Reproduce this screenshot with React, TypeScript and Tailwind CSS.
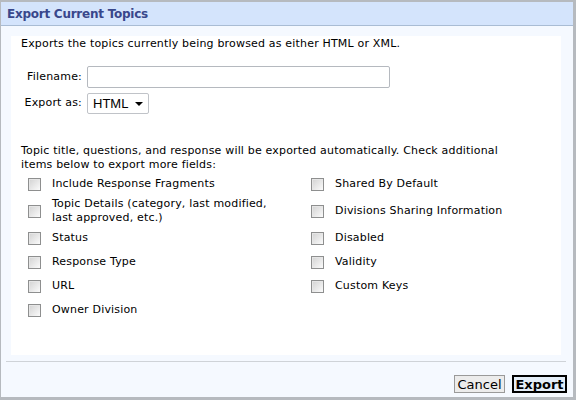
import React from "react";

const leftItems: { label: React.ReactNode; tall?: boolean }[] = [
  { label: "Include Response Fragments" },
  {
    label: (
      <>
        Topic Details (category, last modified,
        <br />
        last approved, etc.)
      </>
    ),
    tall: true,
  },
  { label: "Status" },
  { label: "Response Type" },
  { label: "URL" },
  { label: "Owner Division" },
];

const rightItems = [
  "Shared By Default",
  "Divisions Sharing Information",
  "Disabled",
  "Validity",
  "Custom Keys",
];

function Checkbox() {
  return (
    <span className="w-[13px] h-[13px] flex-shrink-0 border border-[#8e8f8f] bg-gradient-to-br from-[#d2d2d2] to-[#fbfbfb] shadow-[inset_1px_1px_0_#e6e6e6]" />
  );
}

function CheckRow({ children, tall }: { children: React.ReactNode; tall?: boolean }) {
  return (
    <div className={`flex items-center gap-[11px] pl-[7px] ${tall ? "h-[30px]" : "h-[24px]"}`}>
      <Checkbox />
      <span className="leading-[14px]">{children}</span>
    </div>
  );
}

export default function App() {
  return (
    <div className="w-[576px] h-[400px] flex flex-col border-l border-t-2 border-r-[3px] border-b-[3px] border-[#b6babf] bg-[#f5f9ff] font-['DejaVu_Sans',sans-serif] text-[11px] tracking-[0.18px] text-black">
      <div className="h-[24px] flex items-center px-[6px] bg-[#d4e4fc] border-b border-[#a9bcd4]">
        <h1 className="text-[12px] font-bold tracking-[-0.25px] text-[#39478b]">Export Current Topics</h1>
      </div>

      <div className="h-[319px] mt-[10px] ml-[10px] mr-[12px] bg-white px-[10px] pt-[1px] flex flex-col">
        <p className="leading-[14px]">Exports the topics currently being browsed as either HTML or XML.</p>

        <div className="mt-[15px] grid grid-cols-[61px_1fr] gap-x-[5px] gap-y-[5px] items-center">
          <label className="text-right">Filename:</label>
          <input className="w-[303px] h-[22px] border border-[#b5b9bf] rounded-[2px] bg-white outline-none" />
          <label className="text-right">Export as:</label>
          <div className="w-[62px] h-[21px] border border-[#c0c3c8] rounded-[2px] flex items-center justify-between pl-[5px] pr-[5px] font-['Liberation_Sans',sans-serif] text-[13px] tracking-normal">
            <span>HTML</span>
            <span className="w-0 h-0 border-l-[4px] border-r-[4px] border-t-[4px] border-l-transparent border-r-transparent border-t-black" />
          </div>
        </div>

        <p className="mt-[30px] leading-[14px]">
          Topic title, questions, and response will be exported automatically. Check additional
          <br />
          items below to export more fields:
        </p>

        <div className="grid grid-cols-[283px_1fr]">
          <div className="flex flex-col">
            {leftItems.map((item, i) => (
              <CheckRow key={i} tall={item.tall}>
                {item.label}
              </CheckRow>
            ))}
          </div>
          <div className="flex flex-col">
            {rightItems.map((label, i) => (
              <CheckRow key={label} tall={i === 1}>
                {label}
              </CheckRow>
            ))}
          </div>
        </div>
      </div>

      <div className="mt-[6px] ml-[5px] mr-[7px] border-t border-[#cfd3d8]" />

      <div className="mt-[13px] flex justify-end gap-[7px] mr-[6px]">
        <button className="h-[18px] w-[51px] border border-[#9a9a9a] bg-[#ececec] text-[13px] leading-none tracking-normal">
          Cancel
        </button>
        <button className="h-[18px] w-[55px] border-2 border-black bg-[#e3edf8] text-[13px] font-bold leading-none tracking-normal">
          Export
        </button>
      </div>
    </div>
  );
}
